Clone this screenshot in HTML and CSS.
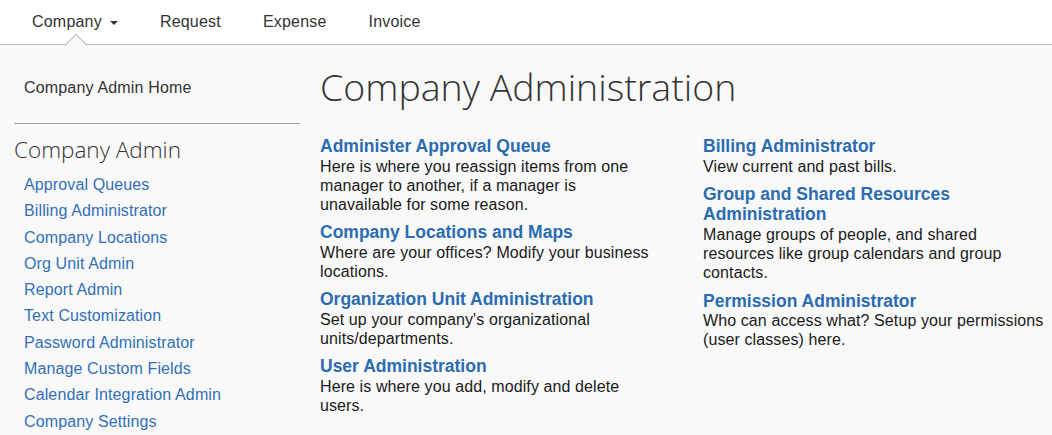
FILE: index.html
```html
<!DOCTYPE html>
<html lang="en">
<head>
<meta charset="utf-8">
<title>Company Administration</title>
<link rel="stylesheet" href="styles.css">
</head>
<body>
<nav class="topnav">
  <a class="nav-item active" href="#">Company <span class="caret"></span><span class="notch"></span></a>
  <a class="nav-item" href="#">Request</a>
  <a class="nav-item" href="#">Expense</a>
  <a class="nav-item" href="#">Invoice</a>
</nav>
<div class="page">
  <aside class="sidebar">
    <a class="home-link" href="#">Company Admin Home</a>
    <hr class="divider">
    <h2 class="side-heading">Company Admin</h2>
    <ul class="side-links">
      <li><a href="#">Approval Queues</a></li>
      <li><a href="#">Billing Administrator</a></li>
      <li><a href="#">Company Locations</a></li>
      <li><a href="#">Org Unit Admin</a></li>
      <li><a href="#">Report Admin</a></li>
      <li><a href="#">Text Customization</a></li>
      <li><a href="#">Password Administrator</a></li>
      <li><a href="#">Manage Custom Fields</a></li>
      <li><a href="#">Calendar Integration Admin</a></li>
      <li><a href="#">Company Settings</a></li>
    </ul>
  </aside>
  <main class="main">
    <h1 class="page-title">Company Administration</h1>
    <div class="cols">
      <div class="col">
        <div class="item">
          <a class="item-title" href="#">Administer Approval Queue</a>
          <p class="item-desc">Here is where you reassign items from one manager to another, if a manager is unavailable for some reason.</p>
        </div>
        <div class="item">
          <a class="item-title" href="#">Company Locations and Maps</a>
          <p class="item-desc">Where are your offices? Modify your business locations.</p>
        </div>
        <div class="item">
          <a class="item-title" href="#">Organization Unit Administration</a>
          <p class="item-desc">Set up your company's organizational units/departments.</p>
        </div>
        <div class="item">
          <a class="item-title" href="#">User Administration</a>
          <p class="item-desc">Here is where you add, modify and delete users.</p>
        </div>
      </div>
      <div class="col">
        <div class="item">
          <a class="item-title" href="#">Billing Administrator</a>
          <p class="item-desc">View current and past bills.</p>
        </div>
        <div class="item">
          <a class="item-title" href="#">Group and Shared Resources Administration</a>
          <p class="item-desc">Manage groups of people, and shared resources like group calendars and group contacts.</p>
        </div>
        <div class="item">
          <a class="item-title" href="#">Permission Administrator</a>
          <p class="item-desc">Who can access what? Setup your permissions (user classes) here.</p>
        </div>
      </div>
    </div>
  </main>
</div>
</body>
</html>
```
FILE: styles.css
```css
html, body {
  margin: 0;
  padding: 0;
}
body {
  font-family: "Liberation Sans", Arial, sans-serif;
  background: #f9f9f9;
  color: #222;
  overflow-x: hidden;
}
a {
  text-decoration: none;
}

.topnav {
  display: flex;
  align-items: stretch;
  height: 44px;
  background: #fff;
  border-bottom: 1px solid #b9b9b9;
  padding-left: 11px;
}
.nav-item {
  position: relative;
  display: flex;
  align-items: center;
  padding: 0 21px;
  font-size: 16px;
  letter-spacing: 0.2px;
  color: #333;
}
.caret {
  display: inline-block;
  width: 0;
  height: 0;
  margin-left: 8px;
  margin-top: 2px;
  border-left: 4px solid transparent;
  border-right: 4px solid transparent;
  border-top: 4px solid #333;
}
.notch {
  position: absolute;
  left: 50%;
  bottom: -9px;
  width: 15px;
  height: 15px;
  margin-left: -7px;
  background: #f9f9f9;
  border-top: 1px solid #b9b9b9;
  border-left: 1px solid #b9b9b9;
  transform: rotate(45deg);
}

.page {
  display: flex;
  gap: 20px;
  padding-left: 14px;
}
.sidebar {
  flex: 0 0 286px;
  padding-top: 33px;
}
.home-link {
  display: block;
  padding-left: 10px;
  font-size: 16px;
  line-height: 20px;
  letter-spacing: 0.17px;
  color: #333;
}
.divider {
  margin: 25px 0 0;
  border: 0;
  border-top: 1px solid #a0a0a0;
  height: 0;
}
.side-heading {
  margin: 12px 0 0;
  font-family: "Open Sans", "Liberation Sans", sans-serif;
  font-weight: 300;
  font-size: 22.5px;
  line-height: 28px;
  color: #333;
}
.side-links {
  list-style: none;
  margin: 8px 0 0;
  padding: 0 0 0 10px;
}
.side-links li {
  font-size: 16px;
  line-height: 26.3px;
  letter-spacing: 0.12px;
}
.side-links a {
  color: #3170b8;
}

.main {
  flex: 1;
  min-width: 0;
}
.page-title {
  margin: 19px 0 0;
  font-family: "Open Sans", "Liberation Sans", sans-serif;
  font-weight: 300;
  font-size: 37.5px;
  line-height: 46px;
  color: #333;
}
.cols {
  display: grid;
  grid-template-columns: 340px 343px;
  column-gap: 43px;
  margin-top: 26px;
}
.item {
  margin-bottom: 8px;
}
.item-title {
  display: block;
  font-size: 17.5px;
  font-weight: bold;
  line-height: 20.5px;
  color: #2b6cb0;
}
.item-desc {
  margin: 0;
  font-size: 16px;
  line-height: 19.25px;
  letter-spacing: 0.1px;
  color: #1a1a1a;
}
```
